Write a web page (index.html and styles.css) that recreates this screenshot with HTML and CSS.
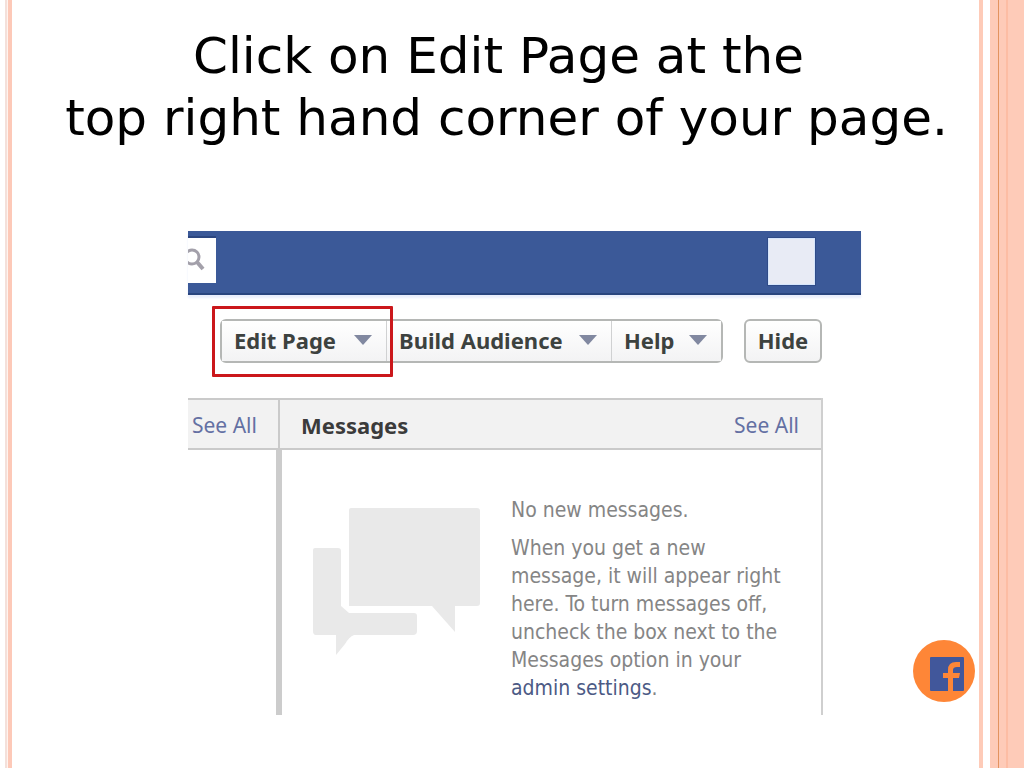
FILE: index.html
```html
<!DOCTYPE html>
<html lang="en">
<head>
<meta charset="utf-8">
<title>Edit Page</title>
<link rel="stylesheet" href="styles.css">
</head>
<body>
<div class="slide">
  <div class="stripes-left"></div>
  <main class="content">
    <h1 class="title"><span class="title-top">Click on Edit Page at the</span><br>top right hand corner of your page.</h1>
    <section class="capture">
      <header class="topbar">
        <button class="search" aria-label="Search">
          <svg width="28" height="45" viewBox="0 0 28 45" fill="none" stroke="#a3a0aa"><circle cx="4" cy="19" r="7" stroke-width="3"/><path d="M9 24l6 7" stroke-width="4"/></svg>
        </button>
        <div class="avatar"></div>
      </header>
      <div class="toolbar">
        <div class="group">
          <button class="btn edit">Edit Page <i class="arrow"></i></button>
          <button class="btn build">Build Audience <i class="arrow"></i></button>
          <button class="btn help">Help <i class="arrow"></i></button>
        </div>
        <button class="btn hide">Hide</button>
      </div>
      <div class="panels">
        <div class="side">
          <div class="panel-head"><a href="#all">See All</a></div>
          <div class="side-body"></div>
        </div>
        <section class="messages">
          <div class="panel-head"><h2>Messages</h2><a href="#messages">See All</a></div>
          <div class="panel-body">
            <svg class="bubbles" width="168" height="150" viewBox="0 0 168 150" fill="#e9e9e9"><path d="M38 0h126q3 0 3 3v92q0 3-3 3h-22v26L119 98H36V2q0-2 2-2z"/><path d="M2 40h23q3 0 3 3v55l8 7h65q3 0 3 3v15q0 4-4 4H41q-5 2-9 9l-9 11v-20H3q-3 0-3-4V42q0-2 2-2z"/></svg>
            <div class="copy">
              <p>No new messages.</p>
              <p>When you get a new message, it will appear right here. To turn messages off, uncheck the box next to the Messages option in your <a href="#settings">admin settings</a>.</p>
            </div>
          </div>
        </section>
      </div>
    </section>
    <a class="badge" href="#facebook" aria-label="Facebook">
      <svg width="62" height="62" viewBox="0 0 62 62"><circle cx="31" cy="31" r="31" fill="#fe8637"/><rect x="17" y="17" width="34" height="34" rx="1" fill="#41579b"/><path d="M35 51V38h-5v-5h5v-3q0-8 8-8h4v5h-3q-4 0-4 3v3h7l-1 5h-6v13z" fill="#fe8637"/></svg>
    </a>
  </main>
  <div class="stripes-right"></div>
</div>
</body>
</html>
```
FILE: styles.css
```css
* { box-sizing: border-box; }
body { margin: 0; background: #fff; font-family: "Noto Sans", sans-serif; }
.slide { display: flex; min-height: 100vh; }
.stripes-left {
  flex: 0 0 12px;
  background: linear-gradient(90deg, #fff 5px, #f4e0da 5px 7px, #fff3ee 7px 8px, #fdc9b8 8px);
}
.stripes-right {
  flex: 0 0 45px;
  background: linear-gradient(90deg, #fecbb8 4px, #fff 4px 11px, #fecbb8 11px 19px, #e3935f 19px 20px, #fecbb8 20px 27px, #fdbda4 27px 29px, #fecbb8 29px);
}
.content { flex: 1; min-width: 0; position: relative; }
.title {
  margin: 0;
  padding: 25px 0 0 22px;
  text-align: center;
  font: 400 50px/62px "DejaVu Sans", sans-serif;
  color: #000;
}
.title-top { margin-right: 16px; }
.capture { margin: 82px 118px 0 176px; }
.topbar {
  display: flex;
  justify-content: space-between;
  align-items: flex-start;
  height: 64px;
  padding: 7px 46px 0 0;
  background: #3b5998;
  border-bottom: 2px solid #29457e;
  box-shadow: 0 3px 2px #e9eefc;
}
.search { width: 28px; height: 45px; padding: 0; border: 0; background: #fff; box-shadow: 0 -2px 0 #2c4680; }
.search svg { display: block; }
.avatar { width: 47px; height: 47px; background: #e8ebf5; border: 1px solid #d5e5fc; box-shadow: 0 0 0 1px #2f4b88; }
.toolbar { display: flex; gap: 21px; padding: 24px 39px 0 32px; }
.group { display: flex; flex: 1; border: 2px solid #b5b7b5; border-radius: 6px; }
.btn {
  position: relative;
  display: flex;
  align-items: center;
  justify-content: space-between;
  height: 40px;
  padding: 0 14px 2px 12px;
  border: 0;
  border-right: 1px solid #d0d1d2;
  background: linear-gradient(#fff, #f3f3f4);
  font: 700 22px/28px "Noto Sans", sans-serif;
  color: #3d423f;
  white-space: nowrap;
}
.edit { flex: 0 1 165px; z-index: 1; }
.build { flex: 0 1 225px; }
.help { flex: 1 1 109px; border-right: 0; }
.edit::after { content: ""; position: absolute; inset: -15px -7px -16px -10px; border: 3px solid #cb171b; border-radius: 1px; }
.arrow { border: 9px solid transparent; border-top: 10px solid #8188a0; border-bottom: 0; }
.hide { flex: 0 0 78px; height: 44px; justify-content: center; padding: 0 0 2px; border: 2px solid #b5b7b5; border-radius: 6px; }
.panels { display: flex; margin: 35px 38px 0 0; }
.side { flex: 0 0 92px; min-width: 0; display: flex; flex-direction: column; }
.messages { flex: 1; border-right: 2px solid #cfcfcf; }
.panel-head {
  display: flex;
  align-items: center;
  justify-content: space-between;
  height: 52px;
  padding: 2px 22px 0;
  background: #f2f2f2;
  border: solid #cacaca;
  border-width: 2px 0;
  font-size: 21px;
  line-height: 28px;
}
.side .panel-head { padding: 2px 4px 0; }
.messages .panel-head { border-left: 2px solid #cacaca; margin-left: -2px; padding-left: 21px; }
.panel-head h2 { margin: 0; font-size: 22px; line-height: 28px; color: #3b3b3b; }
a { color: #6470a3; text-decoration: none; }
.side-body { flex: 1; width: 94px; border-right: 6px solid #ccc; }
.panel-body { display: flex; gap: 30px; padding: 46px 24px 13px 33px; }
.bubbles { flex: none; margin-top: 12px; }
.copy { flex: 1; font: 21px/28px "DejaVu Sans Condensed", "DejaVu Sans", sans-serif; color: #858585; }
.copy p { margin: 0 0 10px; }
.copy p:last-child { margin: 0; }
.copy a { color: #4c5a85; }
.badge { position: absolute; right: 4px; bottom: 66px; height: 62px; }
```
